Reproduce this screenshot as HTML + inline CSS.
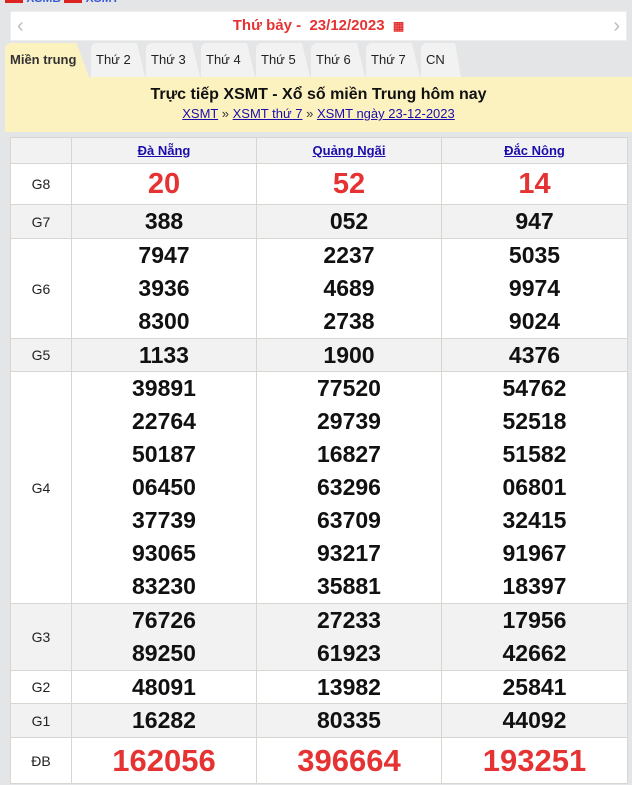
<!DOCTYPE html>
<html><head><meta charset="utf-8"><style>
*{margin:0;padding:0;box-sizing:border-box}
body{width:632px;height:785px;overflow:hidden;background:#e4e5e7;font-family:"Liberation Sans",Arial,sans-serif;position:relative}
.top{position:absolute;left:5px;top:-9px;font-size:12px;color:#3b5bd6;font-weight:bold}
.top i{display:inline-block;width:18px;height:8px;background:#d22;vertical-align:middle}
.date{position:absolute;left:10px;top:11px;width:617px;height:30px;background:#fff;border:1px solid #eee;text-align:center;color:#e53333;font-weight:bold;font-size:15px;line-height:28px}
.date .l,.date .r{position:absolute;top:0;color:#bbb;font-size:20px;font-weight:normal}
.date .l{left:6px}.date .r{right:6px}
.tabs{position:absolute;left:5px;top:43px;height:34px}
.tab{position:absolute;top:0;height:34px;background:#f2f2f2;font-size:13px;line-height:34px;padding-left:5px;color:#222;clip-path:polygon(0 0,85% 0,100% 100%,0 100%);border-radius:6px 6px 0 0}
.tab.a{background:#fcf2c0;font-weight:bold;color:#333}
.banner{position:absolute;left:5px;top:77px;width:627px;height:55px;background:#fcf2c0;text-align:center}
.banner h1{font-size:16px;font-weight:bold;color:#111;margin-top:9px}
.banner p{font-size:13px;margin-top:2px;color:#333}
.banner a{color:#1a0dab;text-decoration:underline}
table{position:absolute;left:10px;top:137px;width:617px;border-collapse:collapse;background:#fff;table-layout:fixed}
td{border:1px solid #d9d6d2;text-align:center;font-weight:bold;font-size:23px;color:#111;padding:0;line-height:1}
td.g{font-weight:normal;font-size:14px;color:#222}
tr.s td{background:#f2f2f2}
th{border:1px solid #d9d6d2;background:#f2f2f2;height:26px;font-size:13px;padding:0}
th a{color:#1a0dab;text-decoration:underline}
.red{color:#e53333}
td div{height:33px;line-height:33px}
</style></head><body>
<div class="top"><i></i> XSMB <i></i> XSMT</div>
<div class="date"><span class="l">‹</span>Thứ bảy -&nbsp; 23/12/2023 &nbsp;<span style="font-size:12px">▦</span><span class="r">›</span></div>
<div class="tabs">
<div class="tab a" style="left:0;width:84px">Miền trung</div>
<div class="tab" style="left:86px;width:54px">Thứ 2</div>
<div class="tab" style="left:141px;width:54px">Thứ 3</div>
<div class="tab" style="left:196px;width:54px">Thứ 4</div>
<div class="tab" style="left:251px;width:54px">Thứ 5</div>
<div class="tab" style="left:306px;width:54px">Thứ 6</div>
<div class="tab" style="left:361px;width:54px">Thứ 7</div>
<div class="tab" style="left:416px;width:40px">CN</div>
</div>
<div class="banner"><h1>Trực tiếp XSMT - Xổ số miền Trung hôm nay</h1>
<p><a>XSMT</a> » <a>XSMT thứ 7</a> » <a>XSMT ngày 23-12-2023</a></p></div>
<table>
<colgroup><col style="width:61px"><col style="width:185px"><col style="width:185px"><col style="width:186px"></colgroup>
<tr><th></th><th><a>Đà Nẵng</a></th><th><a>Quảng Ngãi</a></th><th><a>Đắc Nông</a></th></tr>
<tr style="height:41px"><td class="g">G8</td><td class="red" style="font-size:29px">20</td><td class="red" style="font-size:29px">52</td><td class="red" style="font-size:29px">14</td></tr>
<tr class="s" style="height:34px"><td class="g">G7</td><td>388</td><td>052</td><td>947</td></tr>
<tr><td class="g">G6</td><td><div>7947</div><div>3936</div><div>8300</div></td><td><div>2237</div><div>4689</div><div>2738</div></td><td><div>5035</div><div>9974</div><div>9024</div></td></tr>
<tr class="s" style="height:33px"><td class="g">G5</td><td>1133</td><td>1900</td><td>4376</td></tr>
<tr><td class="g">G4</td><td><div>39891</div><div>22764</div><div>50187</div><div>06450</div><div>37739</div><div>93065</div><div>83230</div></td><td><div>77520</div><div>29739</div><div>16827</div><div>63296</div><div>63709</div><div>93217</div><div>35881</div></td><td><div>54762</div><div>52518</div><div>51582</div><div>06801</div><div>32415</div><div>91967</div><div>18397</div></td></tr>
<tr class="s"><td class="g">G3</td><td><div>76726</div><div>89250</div></td><td><div>27233</div><div>61923</div></td><td><div>17956</div><div>42662</div></td></tr>
<tr style="height:33px"><td class="g">G2</td><td>48091</td><td>13982</td><td>25841</td></tr>
<tr class="s" style="height:34px"><td class="g">G1</td><td>16282</td><td>80335</td><td>44092</td></tr>
<tr style="height:46px"><td class="g">ĐB</td><td class="red" style="font-size:31px">162056</td><td class="red" style="font-size:31px">396664</td><td class="red" style="font-size:31px">193251</td></tr>
</table>
</body></html>
